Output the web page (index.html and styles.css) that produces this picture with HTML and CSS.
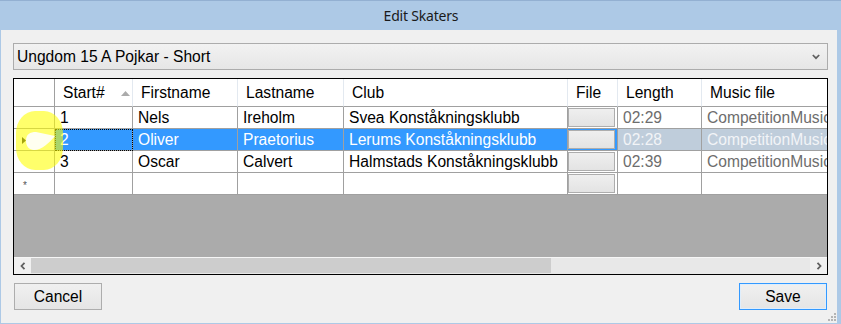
FILE: index.html
```html
<!DOCTYPE html>
<html>
<head>
<meta charset="utf-8">
<title>Edit Skaters</title>
<link rel="stylesheet" href="styles.css">
</head>
<body>
<div class="window">
  <div class="titlebar"><span class="title">Edit Skaters</span></div>
  <div class="content">
    <div class="combo">
      <span class="combo-text">Ungdom 15 A Pojkar - Short</span>
      <svg class="combo-arrow" width="8" height="6" viewBox="0 0 8 6"><path d="M0.8 1 L4 4.2 L7.2 1" fill="none" stroke="#5f5f5f" stroke-width="1.7"/></svg>
    </div>
    <div class="grid">
      <div class="row head">
        <div class="cell rh"></div>
        <div class="cell hc sorted">Start#<svg class="sort" width="9" height="5" viewBox="0 0 9 5"><path d="M0 5 L4.5 0 L9 5 Z" fill="#ababab"/></svg></div>
        <div class="cell hc">Firstname</div>
        <div class="cell hc">Lastname</div>
        <div class="cell hc">Club</div>
        <div class="cell hc">File</div>
        <div class="cell hc">Length</div>
        <div class="cell hc last">Music file</div>
      </div>
      <div class="row">
        <div class="cell rh"></div>
        <div class="cell">1</div>
        <div class="cell">Nels</div>
        <div class="cell">Ireholm</div>
        <div class="cell">Svea Konståkningsklubb</div>
        <div class="cell file"><span class="fbtn"></span></div>
        <div class="cell ro">02:29</div>
        <div class="cell ro last">CompetitionMusic\skater1.mp3</div>
      </div>
      <div class="row sel">
        <div class="cell rh"><svg class="cur" width="5" height="7" viewBox="0 0 5 7"><path d="M0 0 L4 3.5 L0 7 Z" fill="#222"/></svg></div>
        <div class="cell focus">2</div>
        <div class="cell">Oliver</div>
        <div class="cell">Praetorius</div>
        <div class="cell">Lerums Konståkningsklubb</div>
        <div class="cell file"><span class="fbtn"></span></div>
        <div class="cell ro">02:28</div>
        <div class="cell ro last">CompetitionMusic\skater2.mp3</div>
      </div>
      <div class="row">
        <div class="cell rh"></div>
        <div class="cell">3</div>
        <div class="cell">Oscar</div>
        <div class="cell">Calvert</div>
        <div class="cell">Halmstads Konståkningsklubb</div>
        <div class="cell file"><span class="fbtn"></span></div>
        <div class="cell ro">02:39</div>
        <div class="cell ro last">CompetitionMusic\skater3.mp3</div>
      </div>
      <div class="row">
        <div class="cell rh newrow">*</div>
        <div class="cell"></div>
        <div class="cell"></div>
        <div class="cell"></div>
        <div class="cell"></div>
        <div class="cell file"><span class="fbtn"></span></div>
        <div class="cell"></div>
        <div class="cell last"></div>
      </div>
      <div class="empty"></div>
      <div class="hscroll">
        <div class="sbtn"><svg width="6" height="8" viewBox="0 0 6 8"><path d="M4.5 0.8 L1.5 4 L4.5 7.2" fill="none" stroke="#606060" stroke-width="1.8"/></svg></div>
        <div class="thumb"></div>
        <div class="track"></div>
        <div class="sbtn"><svg width="6" height="8" viewBox="0 0 6 8"><path d="M1.5 0.8 L4.5 4 L1.5 7.2" fill="none" stroke="#606060" stroke-width="1.8"/></svg></div>
      </div>
      <svg class="highlight" width="70" height="100" viewBox="0 0 70 100">
        <rect x="2" y="32" width="47" height="59" rx="19" ry="22" fill="#ffff00" fill-opacity="0.58"/>
        <path d="M12 62 C12 55, 16 53, 22 53 L41 57 C36 63, 28 71, 20 71 C15 71, 12 67, 12 62 Z" fill="#ffffff" fill-opacity="0.9"/>
      </svg>
    </div>
    <div class="buttons">
      <button class="btn">Cancel</button>
      <button class="btn default">Save</button>
    </div>
    <svg class="grip" width="10" height="10" viewBox="0 0 10 10">
      <rect x="7" y="1" width="2" height="2" fill="#b4b4b4"/>
      <rect x="4" y="4" width="2" height="2" fill="#b4b4b4"/>
      <rect x="7" y="4" width="2" height="2" fill="#b4b4b4"/>
      <rect x="1" y="7" width="2" height="2" fill="#b4b4b4"/>
      <rect x="4" y="7" width="2" height="2" fill="#b4b4b4"/>
      <rect x="7" y="7" width="2" height="2" fill="#b4b4b4"/>
    </svg>
  </div>
</div>
</body>
</html>
```

FILE: styles.css
```css
html, body {
  margin: 0;
  padding: 0;
  background: #adc9e6;
}

.window {
  width: 841px;
  height: 324px;
  box-sizing: border-box;
  border-top: 1px solid #93b0d2;
  background: #adc9e6;
  display: flex;
  flex-direction: column;
  overflow: hidden;
}

.titlebar {
  height: 29px;
  display: flex;
  align-items: center;
  justify-content: center;
  flex: none;
}

.title {
  font-family: "Noto Sans", "Open Sans", sans-serif;
  font-size: 14px;
  color: #1a1a1a;
  letter-spacing: -0.2px;
  padding-left: 1px;
}

.content {
  position: relative;
  flex: 1;
  margin: 0 4px 1px 1px;
  background: #f0f0f0;
  padding: 13px 9px 0 12px;
  display: flex;
  flex-direction: column;
  font-family: "Liberation Sans", Arial, sans-serif;
  font-size: 15.6px;
  color: #000;
}

.combo {
  height: 27px;
  box-sizing: border-box;
  border: 1px solid #acacac;
  background: linear-gradient(#f2f2f2, #e6e6e6);
  display: flex;
  align-items: center;
  padding: 0 5px 0 3px;
  flex: none;
}

.combo-text {
  flex: 1;
  line-height: 1;
}

.combo-arrow {
  display: block;
  margin-right: 2px;
  margin-top: 1px;
}

.grid {
  position: relative;
  margin-top: 8px;
  height: 197px;
  box-sizing: border-box;
  border: 1px solid #000;
  background: #ababab;
  display: flex;
  flex-direction: column;
  overflow: hidden;
  flex: none;
}

.row {
  display: grid;
  grid-template-columns: 41px 78px 105px 106px 224px 50px 84px 160px;
  height: 22px;
  background: #fff;
  flex: none;
}

.row.head {
  height: 28px;
}

.cell {
  box-sizing: border-box;
  border-right: 1px solid #a0a0a0;
  border-bottom: 1px solid #a0a0a0;
  padding-left: 5px;
  display: flex;
  align-items: center;
  white-space: nowrap;
  overflow: hidden;
  line-height: 1;
}

.cell.last {
  border-right: none;
}

.hc {
  padding-left: 8px;
  padding-top: 1px;
  border-right-color: #e3e9f0;
}

.sorted {
  position: relative;
}

.sort {
  position: absolute;
  left: 66px;
  top: 12px;
}

.rh {
  padding-left: 0;
  position: relative;
}

.cur {
  position: absolute;
  left: 8px;
  top: 8px;
}

.newrow {
  font-size: 10px;
  color: #555;
  padding-left: 9px;
  padding-top: 4px;
}

.ro {
  color: #6d6d6d;
}

.file {
  padding: 1px 2px 1px 0;
  align-items: stretch;
}

.fbtn {
  flex: 1;
  box-sizing: border-box;
  border: 1px solid #adadad;
  background: linear-gradient(#efefef, #e3e3e3);
}

.row.sel .cell {
  background: #3399ff;
  color: #fff;
}

.row.sel .cell.rh {
  background: #fff;
}

.row.sel .cell.ro {
  background: #bfcddb;
  color: #f2f4f7;
}

.row.sel .focus {
  outline: 1px dotted #000;
  outline-offset: -1px;
}

.empty {
  flex: 1;
  background: #ababab;
}

.hscroll {
  height: 17px;
  box-sizing: border-box;
  border-top: 1px solid #f6f6f6;
  display: flex;
  background: #e8e8e8;
  flex: none;
}

.sbtn {
  width: 17px;
  background: #f0f0f0;
  display: flex;
  align-items: center;
  justify-content: center;
}

.sbtn svg {
  display: block;
}

.thumb {
  width: 520px;
  background: #cdcdcd;
  margin: 0 0 1px 0;
}

.track {
  flex: 1;
}

.highlight {
  position: absolute;
  left: 0;
  top: 0;
  z-index: 5;
  pointer-events: none;
}

.buttons {
  margin-top: 8px;
  display: flex;
  justify-content: space-between;
  padding: 0 1px;
  flex: none;
}

.btn {
  width: 88px;
  height: 27px;
  box-sizing: border-box;
  border: 1px solid #adadad;
  background: linear-gradient(#f0f0f0, #e5e5e5);
  font-family: "Liberation Sans", Arial, sans-serif;
  font-size: 15.6px;
  color: #000;
  padding: 0;
  margin: 0;
}

.btn.default {
  border-color: #3399ff;
  box-shadow: inset 0 0 0 1px #dfeefc;
}

.grip {
  position: absolute;
  right: 0;
  bottom: 1px;
}
```
